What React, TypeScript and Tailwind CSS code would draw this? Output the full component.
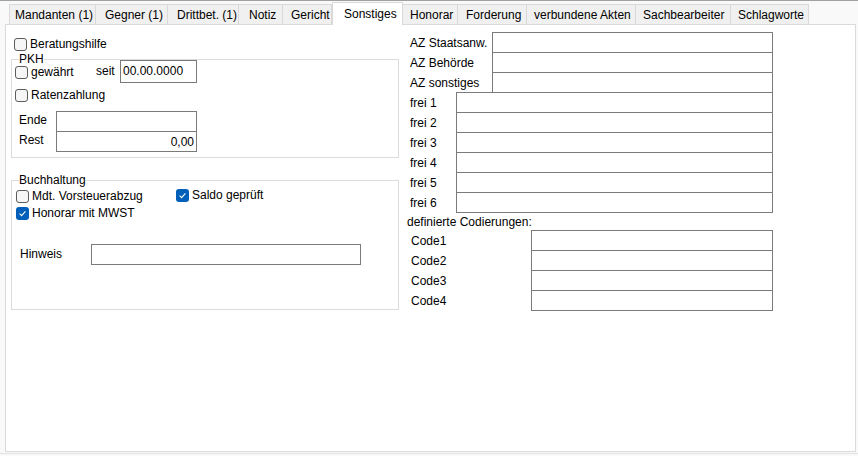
import React from "react";

const tabs = [
  { label: "Mandanten (1)", w: "w-[87px]", pl: "pl-[5px]" },
  { label: "Gegner (1)", w: "w-[72px]", pl: "pl-[9px]" },
  { label: "Drittbet. (1)", w: "w-[71px]", pl: "pl-[9px]" },
  { label: "Notiz", w: "w-[44px]", pl: "pl-[10px]" },
  { label: "Gericht", w: "w-[49px]", pl: "pl-[8px]" },
  { label: "Sonstiges", w: "w-[71px]", pl: "pl-[11px]", active: true },
  { label: "Honorar", w: "w-[55px]", pl: "pl-[7px]" },
  { label: "Forderung", w: "w-[69px]", pl: "pl-[8px]" },
  { label: "verbundene Akten", w: "w-[109px]", pl: "pl-[7px]" },
  { label: "Sachbearbeiter", w: "w-[95px]", pl: "pl-[7px]" },
  { label: "Schlagworte", w: "w-[78px]", pl: "pl-[7px]" },
];

function Check({ checked }: { checked?: boolean }) {
  if (checked) {
    return (
      <span className="w-[13px] h-[13px] rounded-[3px] bg-[#005fb8] flex items-center justify-center shrink-0">
        <svg width="9" height="9" viewBox="0 0 9 9">
          <path d="M1.6 4.7 L3.6 6.6 L7.4 2.4" fill="none" stroke="white" strokeWidth="1.1" />
        </svg>
      </span>
    );
  }
  return <span className="w-[13px] h-[13px] rounded-[3px] border border-[#5c5c5c] bg-[#f6f6f6] shrink-0" />;
}

function CheckRow({ label, checked }: { label: string; checked?: boolean }) {
  return (
    <div className="flex items-center gap-[3px] h-[14px]">
      <Check checked={checked} />
      <span className="leading-[14px]">{label}</span>
    </div>
  );
}

function Field({ className = "", children }: { className?: string; children?: React.ReactNode }) {
  return (
    <div className={`border border-[#7a7a7a] bg-white flex items-center leading-[14px] ${className}`}>
      {children}
    </div>
  );
}

function RightRow({ label, labelW, inputW, first }: { label: string; labelW: string; inputW: string; first?: boolean }) {
  return (
    <div className={`flex items-center ${first ? "" : "-mt-px"}`}>
      <span className={`${labelW} pl-[3px] leading-[14px]`}>{label}</span>
      <Field className={`${inputW} h-[21px]`} />
    </div>
  );
}

export default function App() {
  return (
    <div
      className="w-[858px] h-[456px] bg-[#f9f9f9] border-t border-[#a0a0a0] text-[12px] text-black flex flex-col overflow-hidden"
      style={{ fontFamily: '"Liberation Sans", Arial, sans-serif' }}
    >
      {/* Tabs */}
      <div className="h-[23px] flex items-end pl-[9px] shrink-0">
        {tabs.map((t, i) =>
          t.active ? (
            <div
              key={t.label}
              className={`${t.w} ${t.pl} h-[23px] -mb-px relative z-10 bg-white border border-b-0 border-[#d9d9d9] flex items-center whitespace-nowrap`}
            >
              {t.label}
            </div>
          ) : (
            <div
              key={t.label}
              className={`${t.w} ${t.pl} h-[20px] pt-[1px] bg-[#f0f0f0] border-t border-r border-[#d9d9d9] ${i === 0 ? "border-l" : ""} flex items-center whitespace-nowrap`}
            >
              {t.label}
            </div>
          )
        )}
      </div>

      {/* Panel */}
      <div className="ml-[5px] w-[851px] h-[428px] bg-white border border-[#dadada] flex shrink-0">
        {/* Left column */}
        <div className="ml-[5px] w-[388px]">
          <div className="mt-[12px] pl-[3px]">
            <CheckRow label="Beratungshilfe" />
          </div>

          <fieldset className="mt-[1px] border border-[#dcdcdc] pb-[5px]">
            <legend className="ml-[7px] leading-[14px]">PKH</legend>
            <div className="-mt-[6px] h-[23px] flex items-center">
              <div className="w-[84px] pl-[3px] pt-[1px]">
                <CheckRow label="gewährt" />
              </div>
              <span className="w-[24px] leading-[14px] -mt-[2px]">seit</span>
              <Field className="w-[77px] h-[23px] pl-[2px] -mt-[1px]">00.00.0000</Field>
            </div>
            <div className="mt-[5px] pl-[3px]">
              <CheckRow label="Ratenzahlung" />
            </div>
            <div className="mt-[9px] flex items-center">
              <span className="w-[44px] pl-[7px] leading-[14px] -mt-[3px]">Ende</span>
              <Field className="w-[141px] h-[21px]" />
            </div>
            <div className="-mt-px flex items-center">
              <span className="w-[44px] pl-[7px] leading-[14px] -mt-[3px]">Rest</span>
              <Field className="w-[141px] h-[21px] justify-end pr-[2px]">0,00</Field>
            </div>
          </fieldset>

          <fieldset className="mt-[15px] border border-[#dcdcdc] pb-[44px]">
            <legend className="ml-[7px] leading-[14px]">Buchhaltung</legend>
            <div className="mt-[2px] flex pl-[4px]">
              <div className="w-[160px]">
                <CheckRow label="Mdt. Vorsteuerabzug" />
              </div>
              <div className="-mt-[1px]">
                <CheckRow label="Saldo geprüft" checked />
              </div>
            </div>
            <div className="mt-[3px] pl-[4px]">
              <CheckRow label="Honorar mit MWST" checked />
            </div>
            <div className="mt-[24px] flex items-center">
              <span className="w-[79px] pl-[8px] leading-[14px] -mt-[1px]">Hinweis</span>
              <Field className="w-[270px] h-[21px]" />
            </div>
          </fieldset>
        </div>

        {/* Right column */}
        <div className="ml-[8px] mt-[7px]">
          <RightRow label="AZ Staatsanw." labelW="w-[85px]" inputW="w-[281px]" first />
          <RightRow label="AZ Behörde" labelW="w-[85px]" inputW="w-[281px]" />
          <RightRow label="AZ sonstiges" labelW="w-[85px]" inputW="w-[281px]" />
          {[1, 2, 3, 4, 5, 6].map((n) => (
            <RightRow key={n} label={`frei ${n}`} labelW="w-[49px]" inputW="w-[317px]" />
          ))}
          <div className="mt-[2px] leading-[14px]">definierte Codierungen:</div>
          <div className="mt-[1px]">
            {[1, 2, 3, 4].map((n) => (
              <div key={n} className={`flex items-center ${n === 1 ? "" : "-mt-px"}`}>
                <span className="w-[124px] pl-[4px] leading-[14px]">{`Code${n}`}</span>
                <Field className="w-[242px] h-[21px]" />
              </div>
            ))}
          </div>
        </div>
      </div>
      <div className="mt-[1px] border-t border-[#e2e2e2]" />
    </div>
  );
}
